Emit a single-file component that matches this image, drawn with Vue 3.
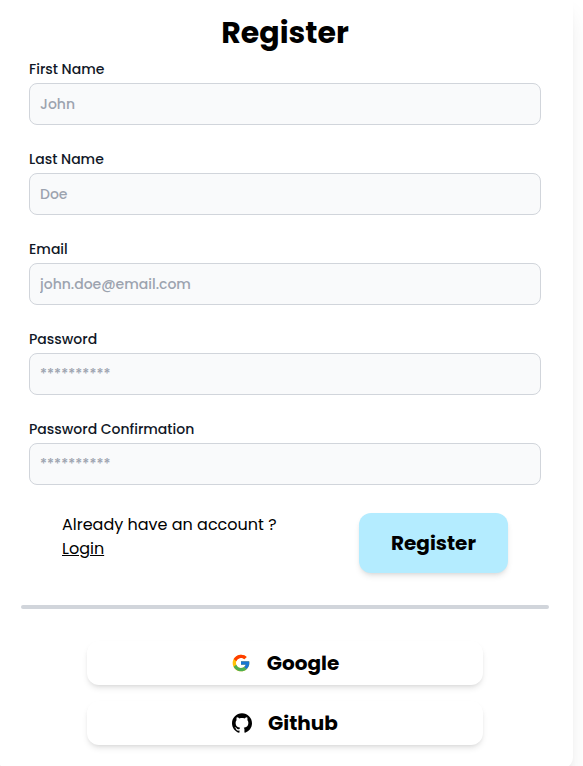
<script setup>
import { reactive } from 'vue'

const fields = [
  { id: 'first', label: 'First Name', type: 'text', placeholder: 'John' },
  { id: 'last', label: 'Last Name', type: 'text', placeholder: 'Doe' },
  { id: 'email', label: 'Email', type: 'email', placeholder: 'john.doe@email.com' },
  { id: 'password', label: 'Password', type: 'password', placeholder: '**********' },
  { id: 'confirmation', label: 'Password Confirmation', type: 'password', placeholder: '**********' },
]
const form = reactive({ first: '', last: '', email: '', password: '', confirmation: '' })
</script>

<template>
  <main class="page">
    <section class="card">
      <h1 class="title">Register</h1>
      <form @submit.prevent>
        <div class="fields">
          <div v-for="f in fields" :key="f.id" class="field">
            <label :for="f.id" class="label">{{ f.label }}</label>
            <input :id="f.id" v-model="form[f.id]" class="input" :type="f.type" :placeholder="f.placeholder" />
          </div>
        </div>
        <div class="actions">
          <div class="account">
            <p>Already have an account ?</p>
            <a class="login" href="#">Login</a>
          </div>
          <button class="submit" type="submit">Register</button>
        </div>
      </form>
      <hr class="divider" />
      <div class="providers">
        <button class="provider" type="button">
          <svg class="google" viewBox="0 0 48 48">
            <path fill="#FFC107" d="M43.611 20.083H42V20H24v8h11.303c-1.649 4.657-6.08 8-11.303 8-6.627 0-12-5.373-12-12s5.373-12 12-12c3.059 0 5.842 1.154 7.961 3.039l5.657-5.657C34.046 6.053 29.268 4 24 4 12.955 4 4 12.955 4 24s8.955 20 20 20 20-8.955 20-20c0-1.341-.138-2.65-.389-3.917z" />
            <path fill="#FF3D00" d="m6.306 14.691 6.571 4.819C14.655 15.108 18.961 12 24 12c3.059 0 5.842 1.154 7.961 3.039l5.657-5.657C34.046 6.053 29.268 4 24 4 16.318 4 9.656 8.337 6.306 14.691z" />
            <path fill="#4CAF50" d="M24 44c5.166 0 9.86-1.977 13.409-5.192l-6.19-5.238A11.91 11.91 0 0 1 24 36c-5.202 0-9.619-3.317-11.283-7.946l-6.522 5.025C9.505 39.556 16.227 44 24 44z" />
            <path fill="#1976D2" d="M43.611 20.083H42V20H24v8h11.303a12.04 12.04 0 0 1-4.087 5.571l.003-.002 6.19 5.238C36.971 39.205 44 34 44 24c0-1.341-.138-2.65-.389-3.917z" />
          </svg>
          <span>Google</span>
        </button>
        <button class="provider" type="button">
          <svg class="github" viewBox="0 0 24 24">
            <path d="M12 .297c-6.63 0-12 5.373-12 12 0 5.303 3.438 9.8 8.205 11.385.6.113.82-.258.82-.577 0-.285-.01-1.04-.015-2.04-3.338.724-4.042-1.61-4.042-1.61C4.422 18.07 3.633 17.7 3.633 17.7c-1.087-.744.084-.729.084-.729 1.205.084 1.838 1.236 1.838 1.236 1.07 1.835 2.809 1.305 3.495.998.108-.776.417-1.305.76-1.605-2.665-.3-5.466-1.332-5.466-5.93 0-1.31.465-2.38 1.235-3.22-.135-.303-.54-1.523.105-3.176 0 0 1.005-.322 3.3 1.23.96-.267 1.98-.399 3-.405 1.02.006 2.04.138 3 .405 2.28-1.552 3.285-1.23 3.285-1.23.645 1.653.24 2.873.12 3.176.765.84 1.23 1.91 1.23 3.22 0 4.61-2.805 5.625-5.475 5.92.42.36.81 1.096.81 2.22 0 1.606-.015 2.896-.015 3.286 0 .315.21.69.825.57C20.565 22.092 24 17.592 24 12.297c0-6.627-5.373-12-12-12" />
          </svg>
          <span>Github</span>
        </button>
      </div>
    </section>
  </main>
</template>

<style>
body { margin: 0; background: #fff; }
</style>

<style scoped>
* { box-sizing: border-box; }
.page {
  height: 766px;
  overflow: hidden;
  color: #000;
  font-family: Poppins, Inter, sans-serif;
  font-size: 16px;
  line-height: 24px;
}
.card {
  width: 576px;
  height: 778px;
  margin: -9px 0 0 -3px;
  padding: 24px;
  border-radius: 12px;
  background: #fff;
  box-shadow: 0 20px 25px -5px rgba(0, 0, 0, 0.1), 0 8px 10px -6px rgba(0, 0, 0, 0.1);
}
.title {
  margin: 0;
  font-size: 30px;
  line-height: 36px;
  font-weight: 700;
  text-align: center;
}
.fields {
  display: flex;
  flex-direction: column;
  gap: 24px;
  padding: 8px 8px 0;
}
.field { display: flex; flex-direction: column; gap: 4px; }
.label {
  align-self: flex-start;
  color: #111827;
  font-size: 14px;
  line-height: 20px;
  font-weight: 500;
  white-space: nowrap;
}
.input {
  width: 100%;
  height: 42px;
  padding: 0 10px;
  border: 1px solid #d1d5db;
  border-radius: 8px;
  outline: none;
  background: #f9fafb;
  color: #111827;
  font: 500 14px/20px Poppins, Inter, sans-serif;
}
.input::placeholder { color: #9ca3af; opacity: 1; }
.actions {
  display: flex;
  justify-content: space-between;
  padding: 28px 41px 0;
}
.account { white-space: nowrap; }
.account p { margin: 0; }
.login { color: #000; text-decoration: underline; }
.submit {
  width: 149px;
  height: 60px;
  padding: 0;
  border: 0;
  border-radius: 12px;
  background: #b4ecff;
  color: #000;
  font: 700 20px/28px Poppins, Inter, sans-serif;
  box-shadow: 0 4px 6px -1px rgba(0, 0, 0, 0.1), 0 2px 4px -2px rgba(0, 0, 0, 0.1);
}
.divider {
  height: 4px;
  margin: 32px 0;
  border: 0;
  border-radius: 2px;
  background: #d1d5db;
}
.providers {
  display: flex;
  flex-direction: column;
  align-items: center;
  gap: 16px;
}
.provider {
  display: flex;
  align-items: center;
  justify-content: center;
  width: 75%;
  height: 44px;
  padding: 0;
  border: 0;
  border-radius: 12px;
  background: #fff;
  color: #000;
  font: 700 20px/28px Poppins, Inter, sans-serif;
  box-shadow: 0 4px 6px -1px rgba(0, 0, 0, 0.1), 0 2px 4px -2px rgba(0, 0, 0, 0.1);
}
.google, .github { width: 20px; height: 20px; margin-right: 16px; }
.github { fill: #000; }
</style>
